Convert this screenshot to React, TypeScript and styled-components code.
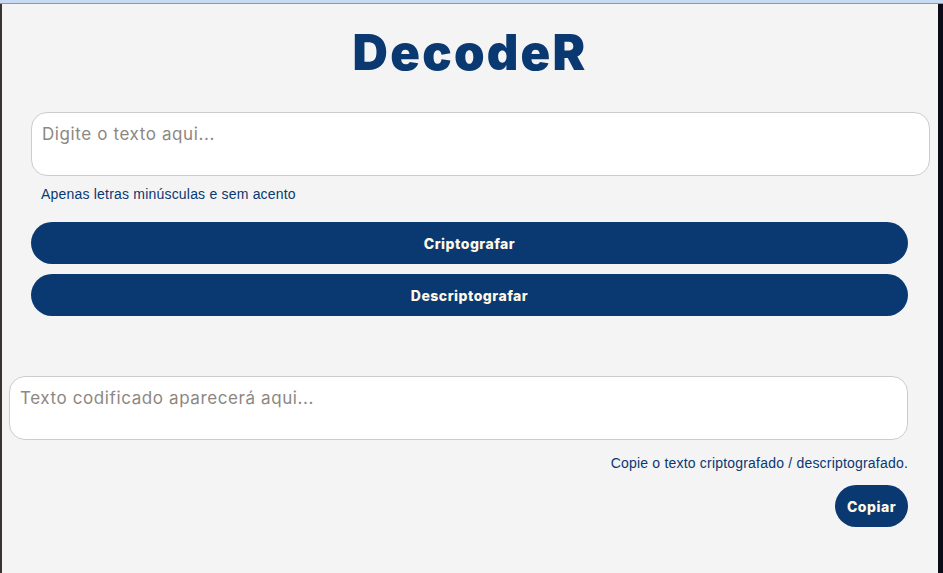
import React from "react";
import styled, { createGlobalStyle } from "styled-components";

const Global = createGlobalStyle`
  html, body { margin: 0; padding: 0; background: #f4f4f4; }
  body { font-family: "Liberation Sans", Arial, sans-serif; }
  * { box-sizing: border-box; }
`;

const Window = styled.div`
  width: 943px;
  height: 573px;
  display: flex;
  flex-direction: column;
  overflow: hidden;
  background: #f4f4f4;
`;

const Chrome = styled.div`
  height: 4px;
  flex: none;
  background: #c9daf3;
  border-bottom: 1px solid #8c98a6;
`;

const Viewport = styled.div`
  flex: 1;
  display: flex;
  flex-direction: column;
  border-left: 2px solid #3a3530;
  border-right: 5px solid #0b0b18;
`;

const Title = styled.h1`
  margin: 19px 0 0;
  text-align: center;
  font-family: Inter, "Noto Sans", sans-serif;
  font-weight: 900;
  font-size: 49px;
  line-height: 60px;
  letter-spacing: 2.2px;
  color: #0a3871;
  height: 60px;
`;

const Section = styled.section<{ $left: number; $right: number; $top: number }>`
  display: flex;
  flex-direction: column;
  margin: ${(p) => p.$top}px ${(p) => p.$right}px 0 ${(p) => p.$left}px;
`;

const TextBox = styled.textarea`
  display: block;
  width: 100%;
  height: 64px;
  resize: none;
  background: #ffffff;
  border: 1px solid #cccccc;
  border-radius: 16px;
  padding: 10px 10px;
  font-family: Inter, "Noto Sans", sans-serif;
  font-size: 17px;
  line-height: 22px;
  letter-spacing: 0.6px;
  color: #333;
  outline: none;
  &::placeholder { color: #8c8782; }
`;

const Hint = styled.p<{ $align?: string; $inset?: number }>`
  margin: 0;
  padding-left: ${(p) => p.$inset ?? 0}px;
  font-family: "Liberation Sans", Arial, sans-serif;
  font-size: 14px;
  line-height: 16px;
  letter-spacing: 0.2px;
  color: #0a3871;
  text-align: ${(p) => p.$align ?? "left"};
`;

const Buttons = styled.div<{ $right: number }>`
  display: flex;
  flex-direction: column;
  gap: 10px;
  margin-right: ${(p) => p.$right}px;
`;

const PillButton = styled.button`
  height: 42px;
  border: none;
  border-radius: 21px;
  background: #0a3871;
  color: #fff8e6;
  font-family: Inter, "Noto Sans", sans-serif;
  font-weight: 800;
  font-size: 14px;
  letter-spacing: 0.5px;
  cursor: pointer;
`;

const CopyRow = styled.div`
  display: flex;
  justify-content: flex-end;
  margin-top: 14px;
`;

const CopyButton = styled(PillButton)`
  width: 73px;
`;

export default function App() {
  return (
    <>
      <Global />
      <Window>
        <Chrome />
        <Viewport>
          <Title>DecodeR</Title>
          <Section $left={29} $right={8} $top={29}>
            <TextBox placeholder="Digite o texto aqui..." />
            <Hint $inset={10} style={{ marginTop: 10 }}>Apenas letras minúsculas e sem acento</Hint>
            <div style={{ height: 20 }} />
            <Buttons $right={22}>
              <PillButton>Criptografar</PillButton>
              <PillButton>Descriptografar</PillButton>
            </Buttons>
          </Section>
          <Section $left={7} $right={30} $top={60}>
            <TextBox placeholder="Texto codificado aparecerá aqui..." />
            <Hint $align="right" style={{ marginTop: 15 }}>Copie o texto criptografado / descriptografado.</Hint>
            <CopyRow>
              <CopyButton>Copiar</CopyButton>
            </CopyRow>
          </Section>
        </Viewport>
      </Window>
    </>
  );
}
